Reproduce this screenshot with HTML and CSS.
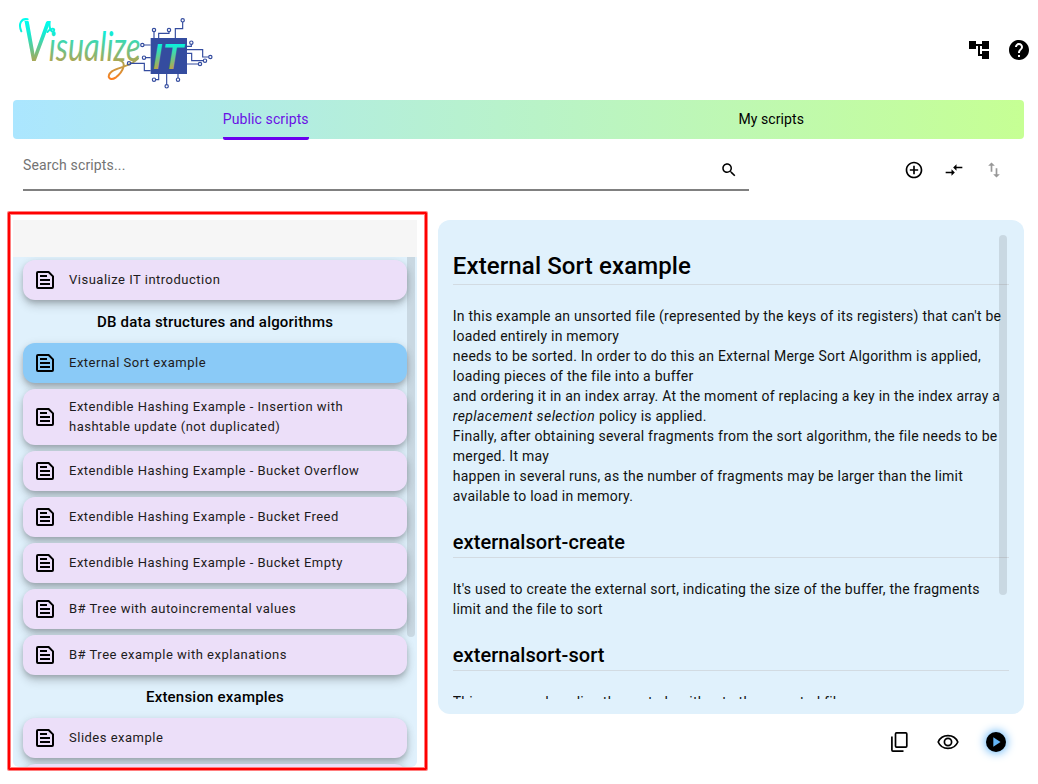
FILE: index.html
```html
<!DOCTYPE html>
<html lang="en">
<head>
<meta charset="utf-8">
<title>Visualize IT</title>
<link rel="stylesheet" href="styles.css">
</head>
<body>
<svg class="defs" width="0" height="0" aria-hidden="true">
  <symbol id="doc" viewBox="0 0 24 24"><path fill="none" stroke="currentColor" stroke-width="2" stroke-linejoin="round" d="M5 4h10.6L20 8.4V19a1 1 0 0 1-1 1H5a1 1 0 0 1-1-1V5a1 1 0 0 1 1-1z"/><path fill="none" stroke="currentColor" stroke-width="2" d="M7 8h7M7 12h10M7 16h10"/></symbol>
</svg>
<div class="app">
  <header class="header">
    <svg class="logo" width="215" height="90" viewBox="0 0 645 270" role="img" aria-label="Visualize IT">
      <defs>
        <linearGradient id="ink" gradientUnits="userSpaceOnUse" x1="0" y1="40" x2="0" y2="215"><stop offset="0" stop-color="#00fff0"/><stop offset=".2" stop-color="#12ebd5"/><stop offset=".7" stop-color="#b0a550"/><stop offset="1" stop-color="#ff7d1e"/></linearGradient>
        <linearGradient id="ink2" gradientUnits="userSpaceOnUse" x1="0" y1="105" x2="0" y2="183"><stop offset="0" stop-color="#00f5e4"/><stop offset="1" stop-color="#b8a54a"/></linearGradient>
      </defs>
      <text class="word" x="37" y="159" textLength="355" lengthAdjust="spacingAndGlyphs" fill="url(#ink)"><tspan class="cap">V</tspan>isualize</text>
      <g fill="none" stroke="url(#ink)" stroke-width="6" stroke-linecap="round">
        <path d="M34 70C24 48 34 30 53 34"/>
        <path d="M112 72C122 60 136 60 132 68S116 66 119 42"/>
        <path d="M328 157C352 162 340 190 318 208C300 220 286 206 306 190C324 178 360 176 384 152"/>
      </g>
      <g fill="none" stroke="#344c9f" stroke-width="3.5">
        <path d="M432 71V90M477 71V76H446V90M518 42V62H496V90M402 111H422M407 149H422M362 166H403V188H422M437 215H446V198M470 230V198M504 210V198M544 109V115H530M596 147H578V125H530M580 158H545V136H530M565 168H530"/>
        <circle cx="432" cy="66" r="5"/><circle cx="477" cy="66" r="5"/><circle cx="518" cy="37" r="5"/><circle cx="397" cy="111" r="5"/><circle cx="402" cy="149" r="5"/><circle cx="357" cy="166" r="5"/><circle cx="432" cy="215" r="5"/><circle cx="470" cy="235" r="5"/><circle cx="504" cy="215" r="5"/><circle cx="544" cy="104" r="5"/><circle cx="601" cy="147" r="5"/><circle cx="585" cy="158" r="5"/><circle cx="570" cy="168" r="5"/>
      </g>
      <rect x="422" y="90" width="109" height="108" fill="#344c9f"/>
      <text class="chip" x="428" y="182" textLength="92" lengthAdjust="spacing" fill="url(#ink2)">IT</text>
    </svg>
    <div class="head-icons">
      <svg width="24" height="24" viewBox="0 0 24 24"><path d="M22 11V3h-7v3H9V3H2v8h7V8h2v10h4v3h7v-8h-7v3h-2V8h2v3z"/></svg>
      <svg width="24" height="24" viewBox="0 0 24 24"><path d="M12 2C6.48 2 2 6.48 2 12s4.48 10 10 10 10-4.480 10-10S17.520 2 12 2zm1 17h-2v-2h2v2zm2.070-7.750l-.9.920C13.450 12.900 13 13.500 13 15h-2v-.5c0-1.100.45-2.100 1.170-2.830l1.240-1.260c.37-.36.59-.86.59-1.410 0-1.100-.9-2-2-2s-2 .9-2 2H8c0-2.210 1.790-4 4-4s4 1.790 4 4c0 .88-.36 1.680-.93 2.250z"/></svg>
    </div>
  </header>
  <nav class="tabs">
    <div class="tab active"><span>Public scripts</span></div>
    <div class="tab"><span>My scripts</span></div>
  </nav>
  <div class="toolbar">
    <div class="search"><span>Search scripts...</span>
      <svg width="18" height="18" viewBox="0 0 24 24"><path d="M15.500 14h-.79l-.28-.27C15.410 12.590 16 11.110 16 9.500 16 5.910 13.090 3 9.500 3S3 5.910 3 9.500 5.910 16 9.500 16c1.610 0 3.090-.59 4.230-1.570l.27.28v.79l5 4.990L20.490 19l-4.990-5zm-6 0C7.010 14 5 11.990 5 9.500S7.010 5 9.500 5 14 7.010 14 9.500 11.990 14 9.500 14z"/></svg>
    </div>
    <div class="tools">
      <svg width="20" height="20" viewBox="0 0 24 24"><path d="M13 7h-2v4H7v2h4v4h2v-4h4v-2h-4V7zm-1-5C6.480 2 2 6.480 2 12s4.480 10 10 10 10-4.480 10-10S17.520 2 12 2zm0 18c-4.410 0-8-3.590-8-8s3.590-8 8-8 8 3.590 8 8-3.590 8-8 8z"/></svg>
      <svg width="20" height="20" viewBox="0 0 24 24"><path d="M9.010 14H2v2h7.010v3L13 15l-3.990-4v3zm5.980-1v-3H22V8h-7.010V5L11 9l3.990 4z"/></svg>
      <svg class="off" width="20" height="20" viewBox="0 0 24 24"><path d="M16 17.010V10h-2v7.010h-3L15 21l4-3.990h-3zM9 3L5 6.990h3V14h2V6.990h3L9 3z"/></svg>
    </div>
  </div>
  <main class="main">
    <section class="list">
      <div class="strip"></div>
      <div class="items">
        <div class="card"><svg><use href="#doc"/></svg><span>Visualize IT introduction</span></div>
        <h4>DB data structures and algorithms</h4>
        <div class="card selected"><svg><use href="#doc"/></svg><span>External Sort example</span></div>
        <div class="card tall"><svg><use href="#doc"/></svg><span>Extendible Hashing Example - Insertion with<br>hashtable update (not duplicated)</span></div>
        <div class="card"><svg><use href="#doc"/></svg><span>Extendible Hashing Example - Bucket Overflow</span></div>
        <div class="card"><svg><use href="#doc"/></svg><span>Extendible Hashing Example - Bucket Freed</span></div>
        <div class="card"><svg><use href="#doc"/></svg><span>Extendible Hashing Example - Bucket Empty</span></div>
        <div class="card"><svg><use href="#doc"/></svg><span>B# Tree with autoincremental values</span></div>
        <div class="card"><svg><use href="#doc"/></svg><span>B# Tree example with explanations</span></div>
        <h4>Extension examples</h4>
        <div class="card"><svg><use href="#doc"/></svg><span>Slides example</span></div>
        <div class="card"></div>
        <i class="thumb"></i>
      </div>
      <div class="highlight"></div>
    </section>
    <section class="detail">
      <article class="doc">
        <div class="doc-body">
          <h1>External Sort example</h1>
          <p>In this example an unsorted file (represented by the keys of its registers) that can't be<br>loaded entirely in memory<br>needs to be sorted. In order to do this an External Merge Sort Algorithm is applied,<br>loading pieces of the file into a buffer<br>and ordering it in an index array. At the moment of replacing a key in the index array a<br><em>replacement selection</em> policy is applied.<br>Finally, after obtaining several fragments from the sort algorithm, the file needs to be<br>merged. It may<br>happen in several runs, as the number of fragments may be larger than the limit<br>available to load in memory.</p>
          <h2>externalsort-create</h2>
          <p>It's used to create the external sort, indicating the size of the buffer, the fragments<br>limit and the file to sort</p>
          <h2>externalsort-sort</h2>
          <p>This command applies the sort algorithm to the unsorted file</p>
          <i class="thumb"></i>
        </div>
      </article>
      <footer class="actions">
        <svg width="24" height="24" viewBox="0 0 24 24"><path fill="none" stroke="#000" stroke-width="1.700" d="M8.500 2.900h9.300a1 1 0 0 1 1 1v12.200a1 1 0 0 1-1 1H8.500a1 1 0 0 1-1-1V3.900a1 1 0 0 1 1-1zM3.900 6.500v13.600a1 1 0 0 0 1 1H15.500"/></svg>
        <svg width="24" height="24" viewBox="0 0 24 24"><path fill="none" stroke="#000" stroke-width="1.700" d="M2.200 12C3.900 8 7.600 5.600 12 5.600S20.100 8 21.800 12C20.100 16 16.400 18.400 12 18.400S3.900 16 2.200 12z"/><circle cx="12" cy="12" r="3.600" fill="none" stroke="#000" stroke-width="1.700"/></svg>
        <span class="play"><svg width="24" height="24" viewBox="0 0 24 24"><circle cx="12" cy="12" r="10"/><path fill="#64b5f6" d="M9.300 7.200v9.600l7.200-4.800z"/></svg></span>
      </footer>
    </section>
  </main>
</div>
</body>
</html>
```

FILE: styles.css
```css
* { box-sizing: border-box; }
body { margin: 0; background: #fff; color: #000; font-family: Roboto, "Liberation Sans", sans-serif; font-size: 14px; overflow: hidden; }
svg { display: block; flex: none; }
.defs { position: absolute; }
.app { width: 1038px; height: 784px; padding: 8px 14px 0 13px; display: flex; flex-direction: column; overflow: hidden; }
.header { height: 92px; display: flex; justify-content: space-between; margin-left: -3px; }
.word { font: italic 400 122px Lato, sans-serif; }
.cap { font-size: 168px; }
.chip { font: italic 500 106px Roboto, sans-serif; }
.head-icons { display: flex; gap: 16px; padding: 30px 0 0; margin-right: -7px; }
.tabs { height: 39px; flex: none; display: flex; border-radius: 4px; background: linear-gradient(90deg, #abe6ff, #c6ff94); }
.tab { flex: 1; display: flex; justify-content: center; letter-spacing: .1px; line-height: 38px; }
.tab span { height: 40px; }
.active { color: #6a11e5; }
.active span { border-bottom: 3px solid #6a00ee; border-radius: 2px; }
.toolbar { height: 81px; flex: none; display: flex; justify-content: space-between; padding: 0 20px 0 10px; }
.search { width: 726px; height: 52px; border-bottom: 2px solid #808080; color: #737373; display: flex; justify-content: space-between; padding-right: 11px; letter-spacing: .15px; }
.search span { line-height: 52px; }
.search svg { margin-top: 22px; fill: #000; }
.tools { display: flex; gap: 20px; padding-top: 21px; }
.off { opacity: .4; }
.main { display: flex; gap: 20.4px; height: 547px; }
.list { position: relative; width: 404.4px; display: flex; flex-direction: column; }
.strip { height: 37px; flex: none; background: #f6f6f6; }
.items { position: relative; height: 510px; overflow: hidden; padding: 3px 10.4px 0 10px; background: #e0f1fc; border-radius: 0 0 6px 6px; display: flex; flex-direction: column; gap: 6px; }
.card { height: 40px; flex: none; border-radius: 12px; background: #ecdff9; display: flex; align-items: center; gap: 12px; padding-left: 10px; font-size: 13px; line-height: 20px; letter-spacing: .5px; white-space: nowrap; color: #1d1b20; box-shadow: 0 3px 5px -1px rgba(0,0,0,.16), 0 6px 10px rgba(0,0,0,.16), 0 1px 10px rgba(0,0,0,.08); }
.card svg { width: 24px; height: 24px; color: #000; }
.selected { background: #8acaf7; }
.tall { height: 56px; }
h4 { margin: 0; height: 31px; flex: none; line-height: 32px; text-align: center; font-size: 15px; font-weight: 500; letter-spacing: .21px; }
.thumb { position: absolute; width: 8px; background: rgba(0,0,0,.1); }
.items .thumb { left: 394px; top: 0; height: 380px; border-radius: 0 0 4px 4px; }
.highlight { position: absolute; left: -5px; top: -8px; width: 419px; height: 558px; border: 2px solid #f00; border-radius: 1px; box-shadow: 0 0 0 1px rgba(255,0,0,.5), inset 0 0 0 1px rgba(255,0,0,.5); }
.detail { flex: 1; min-width: 0; }
.doc { height: 494px; border-radius: 12px; background: #e0f1fc; padding: 15px; }
.doc-body { position: relative; height: 464px; overflow: hidden; white-space: nowrap; }
h1, h2 { margin: 0; font-weight: 500; border-bottom: 1px solid #d2dbe2; }
h1 { font-size: 24px; line-height: 32px; height: 50px; padding-top: 15px; letter-spacing: .12px; }
h2 { font-size: 20px; line-height: 26px; height: 29px; letter-spacing: .06px; }
p { margin: 21px 0 23px; line-height: 20px; letter-spacing: .24px; color: #111; }
em { letter-spacing: .42px; }
.doc-body .thumb { right: 2px; top: 0; height: 360px; border-radius: 4px; }
.actions { display: flex; justify-content: flex-end; gap: 24px; padding: 16px 16px 0; }
.play { border-radius: 50%; background: #8cc8f8; box-shadow: 0 0 10px 1px #64b5f6; width: 20px; height: 20px; margin: 2px; }
.play svg { margin: -2px; }
```
